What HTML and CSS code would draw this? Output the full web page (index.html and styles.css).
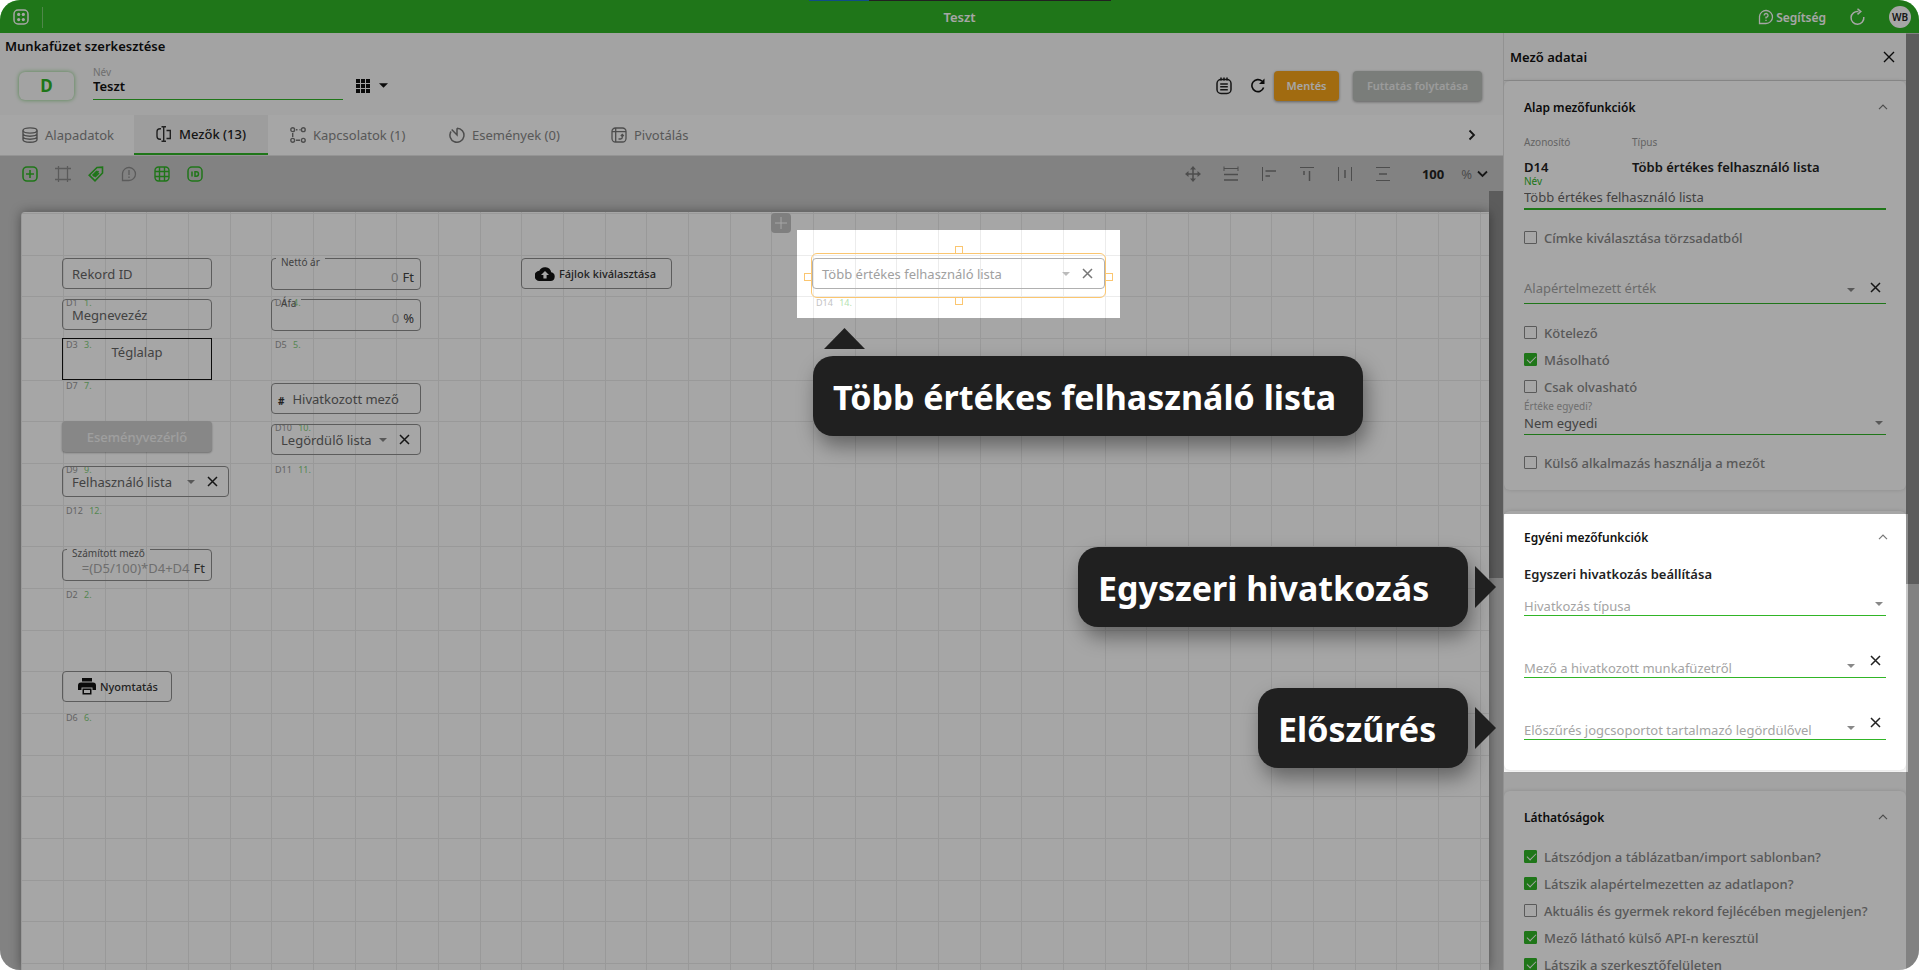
FILE: index.html
```html
<!DOCTYPE html>
<html lang="hu">
<head>
<meta charset="utf-8">
<title>Teszt</title>
<link rel="stylesheet" href="styles.css">
</head>
<body>
<div class="screen">
  <header class="topbar">
    <div class="tab-strip"></div>
    <button class="icon-btn" aria-label="Menü">
      <svg width="16" height="16" viewBox="0 0 16 16" fill="none" stroke="#fff" stroke-width="1.5"><rect x="1" y="1" width="14" height="14" rx="4"/><g fill="#fff" stroke="none"><circle cx="5.7" cy="5.4" r="1.6"/><circle cx="10.3" cy="5.4" r="1.6"/><circle cx="5.7" cy="10.6" r="1.6"/><circle cx="10.3" cy="10.6" r="1.6"/></g></svg>
    </button>
    <span class="divider"></span>
    <h1 class="app-title">Teszt</h1>
    <div class="top-actions">
      <a class="help" href="#">
        <svg width="16" height="16" viewBox="0 0 16 16" fill="none" stroke="#fff" stroke-width="1.3"><path d="M1.5 14.5V7.5A6.5 6.5 0 1 1 8 14.5Z"/><path d="M6.2 6.4A1.9 1.9 0 1 1 8 8.3V9.4M8 10.8V12"/></svg>
        <span>Segítség</span>
      </a>
      <button class="icon-btn" aria-label="Újratöltés">
        <svg width="17" height="18" viewBox="0 0 17 18" fill="none" stroke="#fff" stroke-width="1.5"><path d="M9.5 3.5A6.4 6.4 0 1 0 14.8 9"/><path d="M8.5 .8L11.8 3.6L8.5 6.4"/></svg>
      </button>
      <button class="avatar">WB</button>
    </div>
  </header>

  <div class="workspace">
    <main class="editor">
      <h2 class="page-title">Munkafüzet szerkesztése</h2>
      <div class="book-row">
        <div class="book-code">D</div>
        <div class="book-name">
          <label for="bookname">Név</label>
          <input id="bookname" type="text" value="Teszt">
        </div>
        <button class="icon-btn grid-pick" aria-label="Ikon választása">
          <svg width="14" height="14" viewBox="0 0 14 14" fill="#111"><path d="M0 0h4v4H0zM5 0h4v4H5zM10 0h4v4h-4zM0 5h4v4H0zM5 5h4v4H5zM10 5h4v4h-4zM0 10h4v4H0zM5 10h4v4H5zM10 10h4v4h-4z"/></svg>
          <svg width="9" height="5" viewBox="0 0 10 5" fill="#111"><path d="M0 0h10L5 5z"/></svg>
        </button>
        <div class="book-actions">
          <button class="icon-btn" aria-label="Napló">
            <svg width="16" height="18" viewBox="0 0 16 18" fill="none" stroke="#222" stroke-width="1.5"><rect x="1" y="2.5" width="14" height="14" rx="4"/><path d="M5 .5V3.5M8 .5V3.5M11 .5V3.5M4.2 7h7.6M4.2 9.8h7.6M4.2 12.7h7.6"/></svg>
          </button>
          <button class="icon-btn" aria-label="Frissítés">
            <svg width="15" height="15" viewBox="0 0 15 15" fill="none" stroke="#111" stroke-width="1.6"><path d="M12 3.200A6 6 0 1 0 13.600 9.500"/><path d="M14.500 .5V6H9Z" fill="#111" stroke="none"/></svg>
          </button>
          <button class="btn btn-save">Mentés</button>
          <button class="btn btn-run">Futtatás folytatása</button>
        </div>
      </div>

      <nav class="tabs">
        <a href="#" class="tab tab-s"><svg width="16" height="16" viewBox="0 0 16 16" fill="none" stroke="#777" stroke-width="1.4"><ellipse cx="8" cy="3.5" rx="7" ry="2.6"/><path d="M1 3.5V12.5C1 14 4 15.2 8 15.2S15 14 15 12.5V3.5M1 6.6C1 8 4 9.2 8 9.2S15 8 15 6.6M1 9.6C1 11 4 12.2 8 12.2S15 11 15 9.6"/></svg>Alapadatok</a>
        <a href="#" class="tab tab-s tab-active"><svg width="16" height="16" viewBox="0 0 16 16" fill="none" stroke="#333" stroke-width="1.4"><path d="M5 2.7H4A3 3 0 0 0 1 5.700V10.300A3 3 0 0 0 4 13.300H5M10.500 4.500H14.300V12.500H10.500M7.700 1V15M5.500 .7H7L7.700 1.500L8.400 .7H10M5.500 15.300H7L7.700 14.500L8.400 15.300H10"/></svg>Mezők (13)</a>
        <a href="#" class="tab tab-m"><svg width="16" height="16" viewBox="0 0 16 16" fill="none" stroke="#777" stroke-width="1.4"><circle cx="2.700" cy="2.700" r="1.900"/><circle cx="13.300" cy="2.700" r="1.900"/><circle cx="2.700" cy="13.300" r="1.900"/><circle cx="13.300" cy="13.300" r="1.900"/><path d="M2.700 6V10M6 2.700H7.500M9.500 2.700H10.500M6 13.300H10"/></svg>Kapcsolatok (1)</a>
        <a href="#" class="tab tab-l"><svg width="16" height="16" viewBox="0 0 16 16" fill="none" stroke="#777" stroke-width="1.500"><path d="M8 1.200A7 7 0 1 1 2 4.500M8 1.200V8L2.700 2.500M2 4.500L1 7"/></svg>Események (0)</a>
        <a href="#" class="tab"><svg width="16" height="16" viewBox="0 0 16 16" fill="none" stroke="#777" stroke-width="1.300"><rect x="1" y="1" width="14" height="14" rx="3.500"/><path d="M1 4.700H15M4.700 1V15M7.500 12H9.500A1.800 1.800 0 0 0 11.300 10.200V8M9.800 9L11.300 7.400L12.800 9"/></svg>Pivotálás</a>
        <button class="icon-btn tabs-next" aria-label="Következő">
          <svg width="8" height="12" viewBox="0 0 8 12" fill="none" stroke="#222" stroke-width="1.800"><path d="M1.500 1.500L6 6L1.500 10.500"/></svg>
        </button>
      </nav>

      <div class="stage">
        <div class="toolbar">
          <div class="tools">
            <button class="icon-btn" aria-label="Hozzáadás"><svg width="16" height="16" viewBox="0 0 16 16" fill="none" stroke="#31b527" stroke-width="1.600"><rect x="1" y="1" width="14" height="14" rx="4"/><path d="M8 4V12M4 8H12"/></svg></button>
            <button class="icon-btn" aria-label="Keret"><svg width="16" height="16" viewBox="0 0 16 16" fill="none" stroke="#8c8c8c" stroke-width="1.300"><path d="M3.500 0V16M12.500 0V16M0 2.500H16M0 13.500H16"/></svg></button>
            <button class="icon-btn" aria-label="Címke"><svg width="16" height="16" viewBox="0 0 16 16" fill="none" stroke="#31b527" stroke-width="1.600"><path d="M9 1.500L14.500 1.200V7L7 14.800L1.200 9.200Z"/><path d="M9 5L4.500 9.500M11 7L7 11M10.500 5L5.500 10.500" /></svg></button>
            <button class="icon-btn" aria-label="Figyelmeztetés"><svg width="16" height="16" viewBox="0 0 16 16" fill="none" stroke="#8c8c8c" stroke-width="1.300"><path d="M1.500 14.500V7.500A6.500 6.500 0 1 1 8 14.500Z"/><path d="M8 4V9M8 10.500V12"/></svg></button>
            <button class="icon-btn" aria-label="Rács"><svg width="16" height="16" viewBox="0 0 16 16" fill="none" stroke="#31b527" stroke-width="1.400"><rect x="1" y="1" width="14" height="14" rx="3.500"/><path d="M5.500 1V15M10.500 1V15M1 5.500H15M1 10.500H15"/></svg></button>
            <button class="icon-btn" aria-label="Azonosítók"><svg width="16" height="16" viewBox="0 0 16 16" fill="none" stroke="#31b527" stroke-width="1.500"><rect x="1" y="1" width="14" height="14" rx="4"/><path d="M5 5.500V10.500M8 5.800V10.200H9.300A2.200 2.200 0 0 0 9.300 5.800Z"/></svg></button>
          </div>
          <div class="tools tools-right">
            <button class="icon-btn" aria-label="Mozgatás"><svg width="16" height="16" viewBox="0 0 16 16" fill="none" stroke="#777" stroke-width="1.500"><path d="M8 2V14M2 8H14"/><path d="M8 0L11 3.500H5ZM8 16L11 12.500H5ZM0 8L3.500 5V11ZM16 8L12.500 5V11Z" fill="#777" stroke="none"/></svg></button>
            <button class="icon-btn" aria-label="Szélesség"><svg width="16" height="16" viewBox="0 0 16 16" fill="none" stroke="#777" stroke-width="1.500"><path d="M1 .5V5M15 .5V5M1 2.500H15" stroke-width="1"/><path d="M1 8.500H15M1 14H15"/></svg></button>
            <button class="icon-btn" aria-label="Balra igazítás"><svg width="16" height="16" viewBox="0 0 16 16" fill="none" stroke="#777" stroke-width="1.500"><path d="M1.500 1V15" stroke-width="1"/><path d="M4.500 5H15M4.500 10H9"/></svg></button>
            <button class="icon-btn" aria-label="Felülre igazítás"><svg width="16" height="16" viewBox="0 0 16 16" fill="none" stroke="#777" stroke-width="1.500"><path d="M1 1.500H15" stroke-width="1"/><path d="M5 5V9M10.500 5V15"/></svg></button>
            <button class="icon-btn" aria-label="Vízszintes elosztás"><svg width="16" height="16" viewBox="0 0 16 16" fill="none" stroke="#777" stroke-width="1.500"><path d="M1.500 1V15M14.500 1V15" stroke-width="1"/><path d="M8 4V12"/></svg></button>
            <button class="icon-btn" aria-label="Függőleges elosztás"><svg width="16" height="16" viewBox="0 0 16 16" fill="none" stroke="#777" stroke-width="1.500"><path d="M1 1.500H15M1 14.500H15" stroke-width="1"/><path d="M4 8H12"/></svg></button>
          </div>
          <div class="zoom">
            <b>100</b><span>%</span>
            <svg width="11" height="8" viewBox="0 0 11 8" fill="none" stroke="#222" stroke-width="1.800"><path d="M1 1.500L5.500 6L10 1.500"/></svg>
          </div>
        </div>

        <div class="stage-body">
          <div class="paper">
            <button class="node page-add" aria-label="Oldal hozzáadása"><svg width="12" height="12" viewBox="0 0 12 12" stroke="#fff" stroke-width="1"><path d="M6 0V12M0 6H12"/></svg></button>

            <div class="node outlined col-a r1">Rekord ID</div>
            <div class="node tag col-a t1">D1 <i>1.</i></div>
            <div class="node outlined col-a r2">Megnevezéz</div>
            <div class="node tag col-a t2">D3 <i>3.</i></div>
            <div class="node rectangle col-a r3">Téglalap</div>
            <div class="node tag col-a t3">D7 <i>7.</i></div>
            <button class="node event-btn col-a r5">Eseményvezérlő</button>
            <div class="node tag col-a t5">D9 <i>9.</i></div>
            <div class="node outlined pick wide col-a r6"><span>Felhasználó lista</span>
              <svg class="caret" width="8" height="4" viewBox="0 0 8 4"><path d="M0 0h8L4 4z"/></svg>
              <svg class="cross" width="11" height="11" viewBox="0 0 11 11"><path d="M1 1L10 10M10 1L1 10"/></svg></div>
            <div class="node tag col-a t6">D12 <i>12.</i></div>
            <fieldset class="node notched col-a r8"><legend>Számított mező</legend><span class="val">=(D5/100)*D4+D4</span><span>Ft</span></fieldset>
            <div class="node tag col-a t8">D2 <i>2.</i></div>
            <button class="node file-btn print col-a r11">
              <svg width="18" height="17" viewBox="0 0 18 17" fill="#111"><path d="M4 0h10v3.500H4zM3 4.500h12a3 3 0 0 1 3 3V12h-3.500V9.500h-11V12H0V7.500a3 3 0 0 1 3-3zM4.500 10.500h9V16.500h-9zM6 12v3h6v-3z" fill-rule="evenodd"/></svg>Nyomtatás</button>
            <div class="node tag col-a t11">D6 <i>6.</i></div>

            <fieldset class="node notched col-b r1"><legend>Nettó ár</legend><span class="val">0</span><span>Ft</span></fieldset>
            <div class="node tag col-b t1">D4 <i>4.</i></div>
            <fieldset class="node notched col-b r2"><legend>Áfa</legend><span class="val">0</span><span>%</span></fieldset>
            <div class="node tag col-b t2">D5 <i>5.</i></div>
            <div class="node outlined ref col-b r4"><b>#</b><span>Hivatkozott mező</span></div>
            <div class="node tag col-b t4">D10 <i>10.</i></div>
            <div class="node outlined pick col-b r5b"><span>Legördülő lista</span>
              <svg class="caret" width="8" height="4" viewBox="0 0 8 4"><path d="M0 0h8L4 4z"/></svg>
              <svg class="cross" width="11" height="11" viewBox="0 0 11 11"><path d="M1 1L10 10M10 1L1 10"/></svg></div>
            <div class="node tag col-b t5">D11 <i>11.</i></div>

            <button class="node file-btn upload col-c r1">
              <svg width="20" height="14" viewBox="0 0 20 14" fill="#111"><path d="M16.200 5.300A6.300 6.300 0 0 0 4.300 3.800A5 5 0 0 0 5 14H15.500A4.400 4.400 0 0 0 16.200 5.300zM11.600 8v3.500H8.400V8H6L10 4l4 4z" fill-rule="evenodd"/></svg>Fájlok kiválasztása</button>

            <div class="node outlined pick selected col-d r1"><span>Több értékes felhasználó lista</span>
              <svg class="caret" width="8" height="4" viewBox="0 0 8 4"><path d="M0 0h8L4 4z"/></svg>
              <svg class="cross" width="11" height="11" viewBox="0 0 11 11"><path d="M1 1L10 10M10 1L1 10"/></svg></div>
            <div class="node selection"><i class="grip grip-t"></i><i class="grip grip-r"></i><i class="grip grip-b"></i><i class="grip grip-l"></i></div>
            <div class="node tag faded col-d t1">D14 <i>14.</i></div>
          </div>
          <div class="scrollbar stage-scroll"><div class="thumb"></div></div>
        </div>
      </div>
    </main>

    <aside class="panel">
      <div class="panel-main">
        <div class="panel-head">
          <h2>Mező adatai</h2>
          <button class="icon-btn" aria-label="Bezárás"><svg width="12" height="12" viewBox="0 0 12 12" stroke="#111" stroke-width="1.400"><path d="M1 1L11 11M11 1L1 11"/></svg></button>
        </div>

        <section class="card card-basic">
          <div class="card-head"><h3>Alap mezőfunkciók</h3><svg width="10" height="6" viewBox="0 0 10 6" fill="none" stroke="#777" stroke-width="1.200"><path d="M1 5.200L5 1L9 5.200"/></svg></div>
          <dl class="facts">
            <div><dt>Azonosító</dt><dd>D14</dd></div>
            <div><dt>Típus</dt><dd>Több értékes felhasználó lista</dd></div>
          </dl>
          <label class="mini mini-green" for="fname">Név</label>
          <input class="line-input" id="fname" type="text" value="Több értékes felhasználó lista">
          <label class="check check-first"><input type="checkbox">Címke kiválasztása törzsadatból</label>
          <div class="line-field tall">
            <select aria-label="Alapértelmezett érték"><option>Alapértelmezett érték</option></select>
            <svg class="caret" width="8" height="4" viewBox="0 0 8 4"><path d="M0 0h8L4 4z"/></svg>
            <button class="icon-btn clear" aria-label="Törlés"><svg class="cross" width="11" height="11" viewBox="0 0 11 11"><path d="M1 1L10 10M10 1L1 10"/></svg></button>
          </div>
          <div class="checks">
            <label class="check"><input type="checkbox">Kötelező</label>
            <label class="check"><input type="checkbox" checked>Másolható</label>
            <label class="check"><input type="checkbox">Csak olvasható</label>
          </div>
          <label class="mini" for="uniq">Értéke egyedi?</label>
          <div class="line-field filled">
            <select id="uniq"><option>Nem egyedi</option></select>
            <svg class="caret" width="8" height="4" viewBox="0 0 8 4"><path d="M0 0h8L4 4z"/></svg>
          </div>
          <label class="check check-last"><input type="checkbox">Külső alkalmazás használja a mezőt</label>
        </section>

        <section class="card card-custom">
          <div class="card-head"><h3>Egyéni mezőfunkciók</h3><svg width="10" height="6" viewBox="0 0 10 6" fill="none" stroke="#777" stroke-width="1.200"><path d="M1 5.200L5 1L9 5.200"/></svg></div>
          <h4>Egyszeri hivatkozás beállítása</h4>
          <div class="links">
            <div class="line-field">
              <select aria-label="Hivatkozás típusa"><option>Hivatkozás típusa</option></select>
              <svg class="caret" width="8" height="4" viewBox="0 0 8 4"><path d="M0 0h8L4 4z"/></svg>
            </div>
            <div class="line-field">
              <select aria-label="Mező a hivatkozott munkafüzetről"><option>Mező a hivatkozott munkafüzetről</option></select>
              <svg class="caret" width="8" height="4" viewBox="0 0 8 4"><path d="M0 0h8L4 4z"/></svg>
              <button class="icon-btn clear" aria-label="Törlés"><svg class="cross" width="11" height="11" viewBox="0 0 11 11"><path d="M1 1L10 10M10 1L1 10"/></svg></button>
            </div>
            <div class="line-field">
              <select aria-label="Előszűrés"><option>Előszűrés jogcsoportot tartalmazó legördülővel</option></select>
              <svg class="caret" width="8" height="4" viewBox="0 0 8 4"><path d="M0 0h8L4 4z"/></svg>
              <button class="icon-btn clear" aria-label="Törlés"><svg class="cross" width="11" height="11" viewBox="0 0 11 11"><path d="M1 1L10 10M10 1L1 10"/></svg></button>
            </div>
          </div>
        </section>

        <section class="card">
          <div class="card-head"><h3>Láthatóságok</h3><svg width="10" height="6" viewBox="0 0 10 6" fill="none" stroke="#777" stroke-width="1.200"><path d="M1 5.200L5 1L9 5.200"/></svg></div>
          <label class="check"><input type="checkbox" checked>Látszódjon a táblázatban/import sablonban?</label>
          <label class="check"><input type="checkbox" checked>Látszik alapértelmezetten az adatlapon?</label>
          <label class="check"><input type="checkbox">Aktuális és gyermek rekord fejlécében megjelenjen?</label>
          <label class="check"><input type="checkbox" checked>Mező látható külső API-n keresztül</label>
          <label class="check"><input type="checkbox" checked>Látszik a szerkesztőfelületen</label>
        </section>
      </div>
      <div class="scrollbar panel-scroll"><div class="thumb"></div></div>
    </aside>
  </div>

  <div class="dim"></div>
  <div class="callout callout-list">Több értékes felhasználó lista</div>
  <div class="callout callout-side callout-ref">Egyszeri hivatkozás</div>
  <div class="callout callout-side callout-filter">Előszűrés</div>
</div>
</body>
</html>
```
FILE: styles.css
```css
* { box-sizing: border-box; }
body { margin: 0; background: #fff; color: #222; font-family: "Noto Sans", "Open Sans", sans-serif; font-size: 13px; }
h1, h2, h3, h4, dl, dd { margin: 0; }
button, input, select { font: inherit; color: inherit; }
button { cursor: pointer; }
svg { display: block; flex: none; }
a { color: inherit; text-decoration: none; }

.screen { position: relative; display: flex; flex-direction: column; height: 100vh; overflow: hidden; border-radius: 20px; background: #fafafa; }
.icon-btn { display: flex; align-items: center; padding: 0; border: 0; background: none; }

/* top bar */
.topbar { position: relative; display: flex; flex: none; align-items: center; height: 33px; padding: 1px 8px 0 13px; background: #31b527; color: #fff; }
.tab-strip { position: absolute; top: 0; left: calc(50% - 151px); width: 302px; height: 1px; background: linear-gradient(to right, #1976d2 60px, #333 60px); }
.divider { width: 1px; height: 21px; margin-left: 13px; background: #7ad072; }
.app-title { position: absolute; left: 0; right: 0; text-align: center; font-size: 13px; font-weight: 600; pointer-events: none; }
.top-actions { display: flex; align-items: center; gap: 23px; margin-left: auto; }
.help { display: flex; align-items: center; gap: 2px; font-size: 12px; font-weight: 600; }
.avatar { width: 22px; height: 22px; padding: 0; border: 0; border-radius: 50%; background: #fff; color: #222; font-size: 10px; font-weight: 600; }

.workspace { display: flex; flex: 1; min-height: 0; }

/* editor */
.editor { display: flex; flex: 1; flex-direction: column; min-width: 0; }
.page-title { padding: 3px 5px 0; font-size: 13px; font-weight: 600; line-height: 20px; color: #111; }
.book-row { display: flex; align-items: center; height: 59px; padding: 0 21px 0 19px; }
.book-code { width: 55px; height: 28px; border-radius: 6px; box-shadow: 0 0 4px #7fce78; color: #31b527; font-size: 17px; font-weight: 700; line-height: 28px; text-align: center; }
.book-name { display: flex; flex-direction: column; width: 250px; margin: 0 0 6px 19px; }
.book-name label { color: #aaa; font-size: 10px; line-height: 12px; }
.book-name input { width: 100%; height: 22px; padding: 0 0 4px; border: 0; border-bottom: 1px solid #31b527; outline: 0; background: none; color: #111; font-weight: 600; }
.grid-pick { gap: 9px; margin-left: 13px; }
.book-actions { display: flex; align-items: center; margin-left: auto; }
.book-actions .icon-btn + .icon-btn { margin: 0 9px 0 18px; }
.btn { height: 30px; padding: 0; border: 0; border-radius: 4px; color: #fff; font-size: 11px; font-weight: 600; box-shadow: 0 1px 3px #0006; }
.btn-save { width: 65px; background: #f8a51a; }
.btn-run { width: 129px; margin-left: 14px; background: #bcc1bc; color: #eee; }

.tabs { display: flex; height: 41px; border-bottom: 1px solid #e4e4e4; background: #fff; }
.tab { display: flex; align-items: center; gap: 7px; padding-left: 22px; color: #888; }
.tab-s { width: 134px; }
.tab-m { width: 159px; }
.tab-l { width: 162px; }
.tab-active { border-bottom: 2px solid #31b527; background: #f2f2f2; color: #222; font-weight: 500; }
.tabs-next { margin: 0 27px 0 auto; }

/* stage */
.stage { display: flex; flex: 1; flex-direction: column; min-height: 0; background: #c8c8c8; }
.toolbar { display: flex; flex: none; align-items: center; height: 35px; padding: 0 15px 0 22px; }
.tools { display: flex; gap: 17px; }
.tools-right { gap: 22px; margin: 0 31px 0 auto; }
.zoom { display: flex; align-items: center; color: #222; }
.zoom span { margin: 0 5px 0 17px; color: #777; }
.stage-body { display: flex; flex: 1; min-height: 0; padding-left: 21px; overflow: hidden; }
.paper {
  position: relative; flex: 1; margin-top: 21px; border-radius: 4px 0 0 0; box-shadow: 0 0 12px #0006;
  background-color: #fff;
  background-image:
    linear-gradient(to right, #ececec 1px, transparent 1px), linear-gradient(to right, #ececec 1px, transparent 1px), linear-gradient(to right, #ececec 1px, transparent 1px),
    linear-gradient(#ececec 1px, transparent 1px), linear-gradient(#ececec 1px, transparent 1px), linear-gradient(#ececec 1px, transparent 1px);
  background-size: 125px 125px;
  background-position: 42px 0, 84px 0, 0 0, 0 43px, 0 84px, 0 1px;
}
.scrollbar { flex: none; background: #c8c8c8; }
.thumb { background: #8e8e8e; }
.stage-scroll { width: 14px; }
.stage-scroll .thumb { height: 387px; }
.panel-scroll { width: 13px; padding-top: 1px; }
.panel-scroll .thumb { height: 550px; }
.caret { fill: #888; }
.cross { fill: none; stroke: #222; stroke-width: 1.5; }

/* form nodes placed on the paper */
.node { position: absolute; margin: 0; }
.col-a { left: 41px; }
.col-b { left: 250px; }
.col-c { left: 500px; }
.col-d { left: 791px; }
.r1 { top: 46px; }
.r2 { top: 87px; }
.r3 { top: 126px; }
.r4 { top: 171px; }
.r5 { top: 209px; }
.r5b { top: 212px; }
.r6 { top: 254px; }
.r8 { top: 337px; }
.r11 { top: 459px; }
.outlined { display: flex; align-items: center; width: 150px; height: 31px; padding: 0 10px 0 9px; border: 1px solid #8e8e8e; border-radius: 4px; color: #666; white-space: nowrap; }
.wide { width: 167px; }
.pick .caret { margin-left: auto; }
.pick .cross { margin-left: 12px; }
.ref { gap: 8px; padding-left: 6px; }
.ref b { padding-top: 4px; color: #333; font-size: 10px; }
.rectangle { width: 150px; height: 42px; padding-top: 4px; border: 1px solid #111; color: #666; text-align: center; }
.event-btn { width: 150px; height: 31px; padding: 0; border: 0; border-radius: 4px; background: #d0d0d0; color: #f4f4f4; font-weight: 500; box-shadow: 0 1px 2px #0005; }
.notched { display: flex; gap: 4px; align-items: flex-end; justify-content: flex-end; width: 150px; height: 32px; min-width: 0; padding: 0 6px 3px 4px; border: 1px solid #8e8e8e; border-radius: 4px; color: #444; white-space: nowrap; }
.notched legend { height: 1px; padding: 0 5px; font-size: 10px; line-height: 8px; color: #666; }
.notched .val { color: #aaa; }
.file-btn { display: flex; align-items: center; gap: 4px; height: 31px; padding: 0 0 0 13px; border: 1px solid #8e8e8e; border-radius: 4px; background: none; color: #333; font-size: 11px; font-weight: 500; white-space: nowrap; }
.upload { width: 151px; }
.print { width: 110px; padding-left: 15px; }
.tag { padding-left: 4px; color: #999; font-size: 9px; line-height: 10px; white-space: nowrap; }
.tag i { margin-left: 4px; color: #84cf7d; font-style: normal; }
.t1 { top: 86px; }
.t2 { top: 128px; }
.t3 { top: 169px; }
.t4 { top: 211px; }
.t5 { top: 253px; }
.t6 { top: 294px; }
.t8 { top: 378px; }
.t11 { top: 501px; }
.selected { width: 293px; padding-right: 11px; border-color: #b0b0b0; color: #a0a0a0; }
.selected .caret { fill: #bbb; }
.selected .cross { stroke: #777; }
.faded { opacity: .6; }
.selection { top: 41px; left: 790px; width: 295px; height: 45px; border: 1px solid #fbc670; border-radius: 6px; }
.grip { position: absolute; width: 8px; height: 8px; border: 1px solid #fbc670; }
.grip-t { top: -8px; left: calc(50% - 4px); }
.grip-b { bottom: -8px; left: calc(50% - 4px); }
.grip-l { left: -8px; top: calc(50% - 3px); }
.grip-r { right: -8px; top: calc(50% - 3px); }
.page-add { top: 1px; left: 750px; display: flex; align-items: center; justify-content: center; width: 20px; height: 20px; padding: 0; border: 0; border-radius: 4px; background: #c4c4c4; }

/* side panel */
.panel { display: flex; flex: none; width: 416px; border-left: 1px solid #e0e0e0; }
.panel-main { flex: 1; overflow: hidden; }
.panel-head { display: flex; align-items: center; justify-content: space-between; height: 48px; padding: 0 11px 0 6px; border-bottom: 1px solid #d8d8d8; color: #111; }
.panel-head h2 { font-size: 13px; font-weight: 600; }
.card { padding: 0 20px; margin-bottom: 21px; border-radius: 6px; background: #fff; box-shadow: 0 0 4px #0002; }
.card-head { display: flex; align-items: center; justify-content: space-between; height: 52px; }
.card-head h3 { font-size: 12px; font-weight: 600; color: #111; }
.card-head svg { margin-right: -2px; }
.card-basic { padding-bottom: 14px; }
.card-custom { padding-bottom: 30px; }
.card h4 { padding-top: 3px; font-size: 13px; font-weight: 600; line-height: 16px; }
.facts { display: grid; grid-template-columns: 108px 1fr; padding-top: 1px; }
.facts dt { margin-bottom: 9px; color: #999; font-size: 10px; line-height: 16px; }
.facts dd { font-size: 13px; font-weight: 600; line-height: 16px; }
.mini { display: block; color: #aaa; font-size: 10px; line-height: 12px; }
.mini-green { color: #31b527; }
.line-input { display: block; width: 100%; height: 23px; padding: 0 0 2px; border: 0; border-bottom: 2px solid #31b527; outline: 0; background: none; color: #666; }
.check { display: flex; align-items: center; gap: 7px; height: 27px; color: #888; font-weight: 500; white-space: nowrap; }
.check input { position: relative; flex: none; width: 13px; height: 13px; margin: 0; appearance: none; border: 1px solid #8a8a8a; border-radius: 1px; }
.check input:checked { border-color: #31b527; background: #31b527; }
.check input:checked::after { content: ""; position: absolute; top: 0; left: 4px; width: 4px; height: 8px; border: solid #fff; border-width: 0 1px 1px 0; transform: rotate(45deg); }
.check-first { margin-top: 14px; }
.check-last { margin-top: 14px; }
.checks { margin-top: 15px; }
.line-field { display: flex; align-items: center; height: 23px; padding-right: 3px; border-bottom: 1px solid #31b527; color: #a4a4a4; }
.line-field select { flex: 1; min-width: 0; height: 100%; padding: 4px 0 0; border: 0; outline: 0; appearance: none; background: none; }
.line-field.tall { height: 35px; margin-top: 18px; }
.tall .caret { margin-top: 8px; }
.tall .clear { margin-top: 2px; }
.line-field.filled { color: #666; }
.line-field.filled select { padding-top: 0; }
.clear { margin: 0 2px 0 15px; }
.links { display: grid; gap: 39px; padding-top: 11px; }
.links .clear { align-self: flex-start; }

/* dimming layer with two openings */
.dim {
  position: absolute; inset: 0; background: rgba(0, 0, 0, .35); pointer-events: none;
  clip-path: polygon(evenodd,
    0 0, 100% 0, 100% 100%, 0 100%, 0 0,
    797px 230px, 1120px 230px, 1120px 318px, 797px 318px, 797px 230px,
    0 0,
    calc(100% - 415px) 514px, calc(100% - 11px) 514px, calc(100% - 11px) 772px, calc(100% - 415px) 772px, calc(100% - 415px) 514px,
    0 0);
}
.callout { position: absolute; height: 80px; padding: 1px 20px 0; border-radius: 20px; background: #202020; box-shadow: 4px 10px 20px #0006; color: #fff; font-size: 34px; font-weight: 700; line-height: 80px; white-space: nowrap; }
.callout::before { content: ""; position: absolute; background: #202020; }
.callout-list { top: 356px; left: 813px; width: 550px; }
.callout-list::before { top: -28px; left: 11px; width: 41px; height: 21px; clip-path: polygon(50% 0, 100% 100%, 0 100%); }
.callout-side { right: 451px; }
.callout-side::before { top: 19px; right: -28px; width: 21px; height: 42px; clip-path: polygon(0 0, 100% 50%, 0 100%); }
.callout-ref { top: 547px; width: 390px; }
.callout-filter { top: 688px; width: 210px; }
```
